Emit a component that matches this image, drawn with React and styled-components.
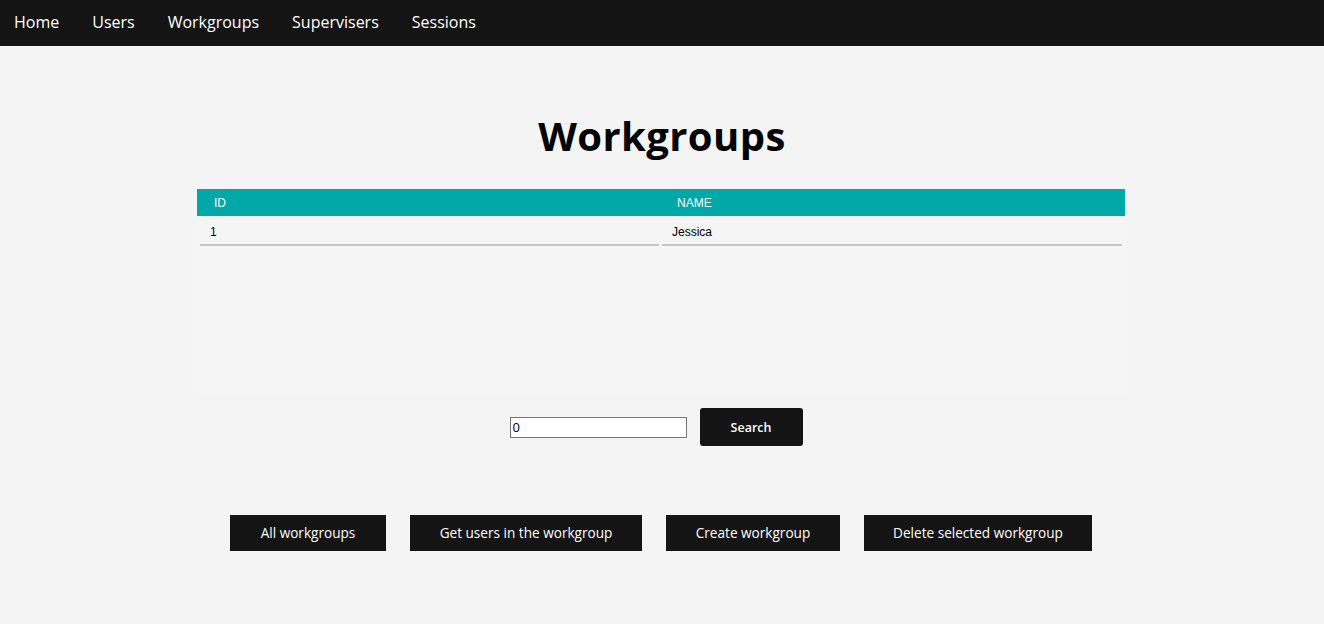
import React from "react";
import styled, { createGlobalStyle } from "styled-components";

const Global = createGlobalStyle`
  html, body { margin: 0; padding: 0; background: #f4f4f4; }
  body { font-family: "Open Sans", "Noto Sans", sans-serif; }
  * { box-sizing: border-box; }
`;

const NavBar = styled.nav`
  height: 46px;
  background: #141414;
  display: flex;
  align-items: center;
  padding: 0 14px;
  gap: 33px;
`;

const NavLink = styled.a`
  color: #ffffff;
  font-size: 16px;
  text-decoration: none;
  line-height: 1;
  padding-bottom: 2px;
`;

const Main = styled.main`
  display: flex;
  flex-direction: column;
  align-items: center;
  padding-top: 64px;
`;

const Title = styled.h1`
  margin: 0 0 27px;
  font-size: 40px;
  font-weight: 700;
  color: #000;
  line-height: 52px;
  letter-spacing: 0.4px;
`;

const TableWrap = styled.div`
  width: 928px;
  margin-right: 2px;
  font-family: "Liberation Sans", Arial, sans-serif;
  font-size: 12px;
`;

const HeadRow = styled.div`
  display: grid;
  grid-template-columns: 465px 1fr;
  background: #00a8a8;
  height: 27px;
  align-items: center;
  color: #ffffff;
`;

const HeadCell = styled.div`
  padding-left: ${(p) => p.$pad}px;
`;

const Body = styled.div`
  height: 180px;
  background: #f5f5f5;
  padding: 0 3px;
`;

const Row = styled.div`
  display: grid;
  grid-template-columns: 459px 460px;
  gap: 3px;
`;

const Cell = styled.div`
  height: 30px;
  padding: 9px 10px 0;
  border-bottom: 2px solid #c6c6c6;
  color: #000;
`;

const SearchRow = styled.div`
  margin-top: 12px;
  display: flex;
  align-items: center;
  gap: 13px;
  margin-right: 12px;
`;

const Input = styled.input`
  width: 177px;
  height: 21px;
  border: 1px solid #767676;
  background: #fff;
  font-family: "Open Sans", sans-serif;
  font-size: 13px;
  padding: 0 2px;
  color: #000;
  outline: none;
`;

const SearchButton = styled.button`
  width: 103px;
  height: 38px;
  border: none;
  border-radius: 3px;
  background: #141414;
  color: #fff;
  font-family: "Open Sans", sans-serif;
  font-size: 12.5px;
  font-weight: 600;
`;

const Actions = styled.div`
  margin-top: 69px;
  display: flex;
  gap: 24px;
  margin-right: 2px;
`;

const ActionButton = styled.button`
  width: ${(p) => p.$w}px;
  height: 36px;
  border: none;
  background: #141414;
  color: #fff;
  font-family: "Open Sans", sans-serif;
  font-size: 13.6px;
  padding: 0 0 2px;
`;

export default function App() {
  return (
    <>
      <Global />
      <NavBar>
        <NavLink href="#">Home</NavLink>
        <NavLink href="#">Users</NavLink>
        <NavLink href="#">Workgroups</NavLink>
        <NavLink href="#">Supervisers</NavLink>
        <NavLink href="#">Sessions</NavLink>
      </NavBar>
      <Main>
        <Title>Workgroups</Title>
        <TableWrap>
          <HeadRow>
            <HeadCell $pad={17}>ID</HeadCell>
            <HeadCell $pad={15}>NAME</HeadCell>
          </HeadRow>
          <Body>
            <Row>
              <Cell>1</Cell>
              <Cell>Jessica</Cell>
            </Row>
          </Body>
        </TableWrap>
        <SearchRow>
          <Input defaultValue="0" />
          <SearchButton>Search</SearchButton>
        </SearchRow>
        <Actions>
          <ActionButton $w={156}>All workgroups</ActionButton>
          <ActionButton $w={232}>Get users in the workgroup</ActionButton>
          <ActionButton $w={174}>Create workgroup</ActionButton>
          <ActionButton $w={228}>Delete selected workgroup</ActionButton>
        </Actions>
      </Main>
    </>
  );
}
